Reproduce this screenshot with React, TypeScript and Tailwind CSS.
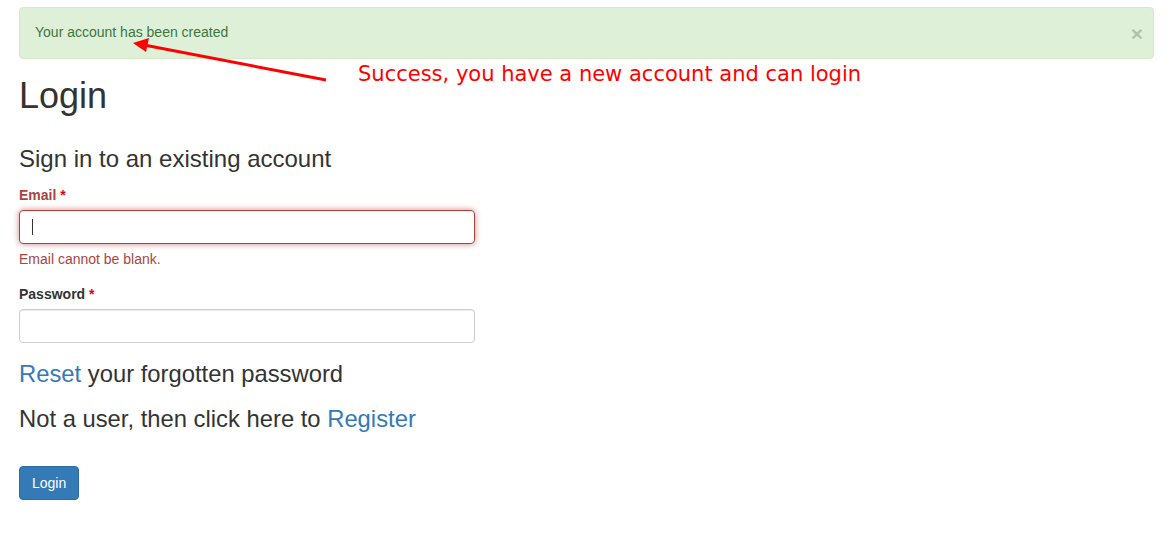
import React from 'react';

export default function App() {
  return (
    <div className="relative min-h-[558px] bg-white px-[19px] pt-[7px] font-['Liberation_Sans',Arial,sans-serif] text-[14px] leading-[20px] text-[#333]">
      {/* Success alert */}
      <div className="flex items-start justify-between rounded-[4px] border border-[#d6e9c6] bg-[#dff0d8] pt-[14px] pb-[16px] pl-[15px] pr-[15px] text-[#3c763d]">
        <span>Your account has been created</span>
        <button className="mr-[-5px] h-[20px] translate-y-[2px] text-[21px] font-bold leading-[20px] text-black opacity-20 [text-shadow:0_1px_0_#fff]">
          ×
        </button>
      </div>

      <h1 className="mt-[17px] mb-[10px] text-[36px] leading-[39.6px] font-normal">Login</h1>

      <h3 className="mt-[30px] mb-[13px] text-[24px] leading-[26.4px] font-normal">Sign in to an existing account</h3>

      <form className="w-[456px]">
        <div className="mb-[15px]">
          <label className="mb-[5px] block font-bold text-[#a94442]">
            Email <span className="text-red-600">*</span>
          </label>
          <div className="flex h-[34px] items-center rounded-[4px] border border-[#a94442] px-3 shadow-[inset_0_1px_1px_rgba(0,0,0,0.075),0_0_6px_#ce8483]">
            <span className="h-[16px] w-px bg-[#333]" />
          </div>
          <p className="mt-[5px] text-[#a94442]">Email cannot be blank.</p>
        </div>

        <div className="mb-[15px]">
          <label className="mb-[5px] block font-bold text-[#333]">
            Password <span className="text-red-600">*</span>
          </label>
          <input
            type="password"
            className="block h-[34px] w-full rounded-[4px] border border-[#ccc] px-3 shadow-[inset_0_1px_1px_rgba(0,0,0,0.075)] outline-none"
          />
        </div>
      </form>

      <p className="mt-[18px] text-[23.8px] leading-[26.4px]">
        <a className="text-[#337ab7]">Reset</a> your forgotten password
      </p>
      <p className="mt-[19px] text-[23.8px] leading-[26.4px]">
        Not a user, then click here to <a className="text-[#337ab7]">Register</a>
      </p>

      <button className="mt-[33px] h-[34px] rounded-[4px] border border-[#2e6da4] bg-[#337ab7] px-3 text-[14px] text-white">
        Login
      </button>

      {/* Annotation */}
      <svg className="pointer-events-none absolute left-0 top-0" width="340" height="100">
        <line x1="326" y1="80" x2="144" y2="45" stroke="#ff0000" strokeWidth="3" />
        <polygon points="133,43 149,38 146,52" fill="#ff0000" />
      </svg>
      <span className="absolute left-[358px] top-[62px] font-['DejaVu_Sans',sans-serif] text-[21px] leading-[25px] text-[#ff0000]">
        Success, you have a new account and can login
      </span>
    </div>
  );
}
